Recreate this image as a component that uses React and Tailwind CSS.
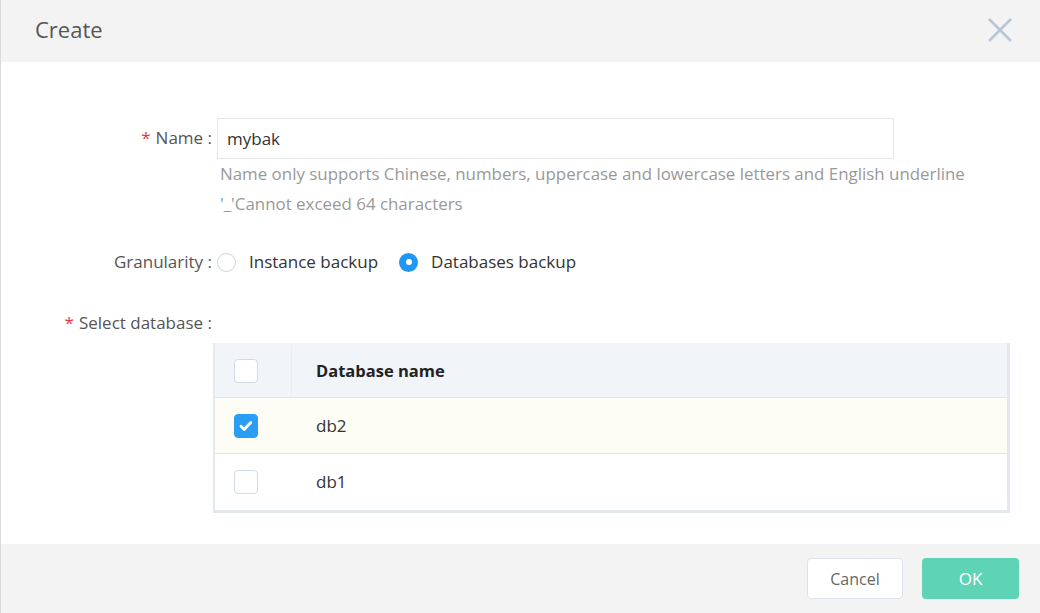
import React, { useState } from "react";

const Checkbox = ({ checked }) => (
  <span
    className={`flex h-[24px] w-[24px] items-center justify-center rounded-[4px] border ${
      checked ? "border-[#2a9df4] bg-[#2a9df4]" : "border-[#d3dbe5] bg-white"
    }`}
  >
    {checked && (
      <svg width="16" height="16" viewBox="0 0 16 16" fill="none">
        <path d="M3 8.3l3.2 3.1 6.6-6.8" stroke="#fff" strokeWidth="2.8" strokeLinecap="round" strokeLinejoin="round" />
      </svg>
    )}
  </span>
);

const Radio = ({ checked, label, onClick }) => (
  <button onClick={onClick} className="flex items-center">
    {checked ? (
      <span className="flex h-[19px] w-[19px] items-center justify-center rounded-full bg-[#2196f3]">
        <span className="h-[6px] w-[6px] rounded-full bg-white" />
      </span>
    ) : (
      <span className="h-[19px] w-[19px] rounded-full border border-[#cbd3de] bg-white" />
    )}
    <span className="ml-[13px] text-[17px] text-[#333]">{label}</span>
  </button>
);

export default function App() {
  const [granularity, setGranularity] = useState("db");
  const [name, setName] = useState("mybak");
  const rows = [
    { name: "db2", checked: true },
    { name: "db1", checked: false },
  ];

  return (
    <div
      className="flex h-[613px] w-[1040px] flex-col border-l border-[#d9d9d9] bg-white"
      style={{ fontFamily: '"Open Sans", "Noto Sans", sans-serif' }}
    >
      {/* header */}
      <div className="flex h-[62px] shrink-0 items-center justify-between bg-[#f3f3f3] pb-[3px] pl-[34px] pr-[28px]">
        <h1 className="text-[22px] text-[#555]">Create</h1>
        <svg width="24" height="24" viewBox="0 0 24 24" fill="none">
          <path d="M1 1l22 22M23 1L1 23" stroke="#b8c6d6" strokeWidth="2.6" />
        </svg>
      </div>

      {/* body */}
      <div className="flex-1 pt-[56px] text-[17px]">
        <div className="grid grid-cols-[211px_1fr] gap-x-[5px]">
          <label className="flex h-[40px] items-center justify-end text-[#555]">
            <span className="mr-[5px] text-[#e4393c]">*</span>Name :
          </label>
          <div>
            <input
              value={name}
              onChange={(e) => setName(e.target.value)}
              className="h-[41px] w-[677px] border border-[#e6e6e6] px-[9px] text-[17px] text-[#333] outline-none"
            />
            <p className="pl-[3px] text-[16.9px] leading-[30px] text-[#999]">
              Name only supports Chinese, numbers, uppercase and lowercase letters and English underline
              <br />
              '_'Cannot exceed 64 characters
            </p>
          </div>

          <label className="mt-[23px] flex h-[40px] items-center justify-end text-[#555]">Granularity :</label>
          <div className="mt-[23px] flex h-[40px] items-center gap-[21px]">
            <Radio label="Instance backup" checked={granularity === "inst"} onClick={() => setGranularity("inst")} />
            <Radio label="Databases backup" checked={granularity === "db"} onClick={() => setGranularity("db")} />
          </div>

          <label className="mt-[21px] flex h-[40px] items-center justify-end text-[#555]">
            <span className="mr-[5px] text-[#e4393c]">*</span>Select database :
          </label>
          <div className="mt-[21px]" />
        </div>

        <div className="ml-[212px] w-[797px] border-b-[3px] border-l-[2px] border-r-[3px] border-[#e3e8ee]">
          <div className="flex h-[55px] border-b border-[#dfe5ec] bg-[#f1f5fa] pt-[2px]">
            <div className="flex w-[77px] items-center border-r border-[#e8edf3] pl-[19px]">
              <Checkbox checked={false} />
            </div>
            <div className="flex items-center pl-[24px] text-[16.5px] font-bold text-[#222]">Database name</div>
          </div>
          {rows.map((r, i) => (
            <div
              key={r.name}
              className={`flex h-[56px] ${i < rows.length - 1 ? "border-b border-[#dfe5ec]" : ""} ${
                r.checked ? "bg-[#fdfdf5]" : "bg-white"
              }`}
            >
              <div className="flex w-[77px] items-center pl-[19px]">
                <Checkbox checked={r.checked} />
              </div>
              <div className="flex items-center pl-[24px] text-[#333]">{r.name}</div>
            </div>
          ))}
        </div>
      </div>

      {/* footer */}
      <div className="flex h-[69px] shrink-0 items-center justify-end gap-[19px] bg-[#f3f3f3] pr-[21px]">
        <button className="h-[41px] w-[96px] rounded-[4px] border border-[#dde3ea] bg-white text-[16px] text-[#666]">
          Cancel
        </button>
        <button className="h-[41px] w-[97px] rounded-[4px] bg-[#5fd3b5] text-[17px] text-white">OK</button>
      </div>
    </div>
  );
}
